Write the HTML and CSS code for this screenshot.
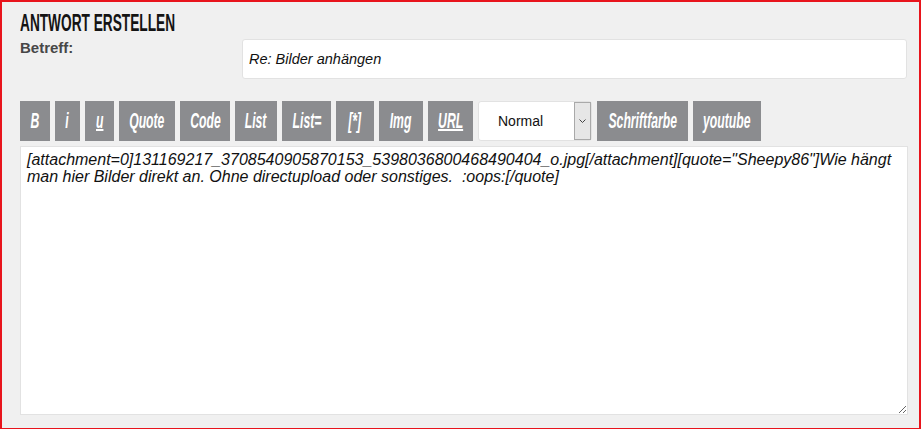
FILE: index.html
```html
<!DOCTYPE html>
<html lang="de">

<head>
    <meta charset="UTF-8">
    <title>Antwort erstellen</title>
    <link rel="stylesheet" href="styles.css">
</head>

<body>
    <div class="reply-frame">
        <h2 class="reply-title"><span class="narrow">ANTWORT ERSTELLEN</span></h2>

        <!-- Subject -->
        <div class="subject-row">
            <label for="subject" class="subject-label">Betreff:</label>
            <input type="text" id="subject" class="subject-input" value="Re: Bilder anhängen">
        </div>

        <!-- BBCode toolbar -->
        <div class="toolbar">
            <button class="bb-button bb-b"><span class="narrow">B</span></button>
            <button class="bb-button bb-i"><span class="narrow">i</span></button>
            <button class="bb-button bb-u"><span class="narrow under">u</span></button>
            <button class="bb-button bb-quote"><span class="narrow">Quote</span></button>
            <button class="bb-button bb-code"><span class="narrow">Code</span></button>
            <button class="bb-button bb-list"><span class="narrow">List</span></button>
            <button class="bb-button bb-listeq"><span class="narrow">List=</span></button>
            <button class="bb-button bb-item"><span class="narrow">[*]</span></button>
            <button class="bb-button bb-img"><span class="narrow">Img</span></button>
            <button class="bb-button bb-url"><span class="narrow under">URL</span></button>
            <div class="size-select">
                <select class="size-native">
                    <option>Normal</option>
                </select>
                <span class="size-arrow">
                    <svg width="7" height="4" viewBox="0 0 7 4"><path d="M0.5 0.5 L3.5 3.5 L6.5 0.5" fill="none" stroke="#444" stroke-width="1"/></svg>
                </span>
            </div>
            <button class="bb-button bb-color"><span class="narrow">Schriftfarbe</span></button>
            <button class="bb-button bb-yt"><span class="narrow">youtube</span></button>
        </div>

        <!-- Message body -->
        <textarea class="message" rows="15">[attachment=0]131169217_3708540905870153_5398036800468490404_o.jpg[/attachment][quote="Sheepy86"]Wie hängt man hier Bilder direkt an. Ohne directupload oder sonstiges.  :oops:[/quote]</textarea>
    </div>
</body>

</html>
```

FILE: styles.css
```css
html,
body {
    margin: 0;
    padding: 0;
    height: 100%;
}

body {
    font-family: "Liberation Sans", Arial, sans-serif;
    background-color: #f0f0f0;
    color: #222;
}

.reply-frame {
    box-sizing: border-box;
    height: 429px;
    width: 921px;
    border: 2px solid #e8141c;
    border-bottom-width: 1px;
    padding: 6px 12px 0 18px;
}

/* condensed look: no narrow font installed, so squeeze a normal one */
.narrow {
    display: inline-block;
    transform: scaleX(0.555);
}

.reply-title {
    margin: 0;
    font-family: "Liberation Sans", Arial, sans-serif;
    font-weight: bold;
    font-size: 24px;
    line-height: 30px;
    color: #141414;
}

.reply-title .narrow {
    transform: scaleX(0.57);
    transform-origin: left center;
}

.subject-row {
    display: flex;
    align-items: flex-start;
    margin-top: 1px;
}

.subject-label {
    width: 222px;
    font-size: 15px;
    font-weight: bold;
    color: #474747;
}

.subject-input {
    flex: 1;
    height: 40px;
    box-sizing: border-box;
    border: 1px solid #e2e2e2;
    border-radius: 3px;
    padding: 0 6px;
    font-family: "Liberation Sans", Arial, sans-serif;
    font-size: 14.5px;
    font-style: italic;
    color: #111;
    background: white;
}

.toolbar {
    display: flex;
    gap: 5px;
    margin-top: 22px;
    height: 40px;
}

.bb-button {
    display: flex;
    align-items: center;
    justify-content: center;
    background-color: #8b8c8f;
    color: white;
    border: none;
    padding: 0;
    font-family: "Liberation Sans", Arial, sans-serif;
    font-style: italic;
    font-weight: bold;
    font-size: 22px;
    white-space: nowrap;
}

.under {
    text-decoration: underline;
    text-decoration-thickness: 1.5px;
}

.bb-b { width: 30px; }
.bb-i { width: 25px; }
.bb-u { width: 29px; }
.bb-quote { width: 56px; }
.bb-code { width: 50px; }
.bb-list { width: 42px; }
.bb-listeq { width: 49px; }
.bb-item { width: 38px; }
.bb-img { width: 44px; }
.bb-url { width: 45px; }
.bb-color { width: 91px; }
.bb-yt { width: 68px; }

.size-select {
    position: relative;
    width: 114px;
}

.size-native {
    appearance: none;
    width: 100%;
    height: 40px;
    border: 1px solid #e2e2e2;
    border-radius: 3px;
    background: white;
    padding: 0 19px;
    font-family: "Liberation Sans", Arial, sans-serif;
    font-size: 14px;
    color: #111;
}

.size-arrow {
    position: absolute;
    top: 1px;
    right: 1px;
    width: 15px;
    height: 36px;
    border: 1px solid #a9a9a9;
    background: #e6e6e6;
    display: flex;
    align-items: center;
    justify-content: center;
}

.message {
    display: block;
    box-sizing: border-box;
    width: 888px;
    height: 269px;
    margin-top: 5px;
    border: 1px solid #e2e2e2;
    padding: 4px 6px;
    font-family: "Liberation Sans", Arial, sans-serif;
    font-size: 16px;
    font-style: italic;
    line-height: 17px;
    color: #111;
    background: white;
}
```
